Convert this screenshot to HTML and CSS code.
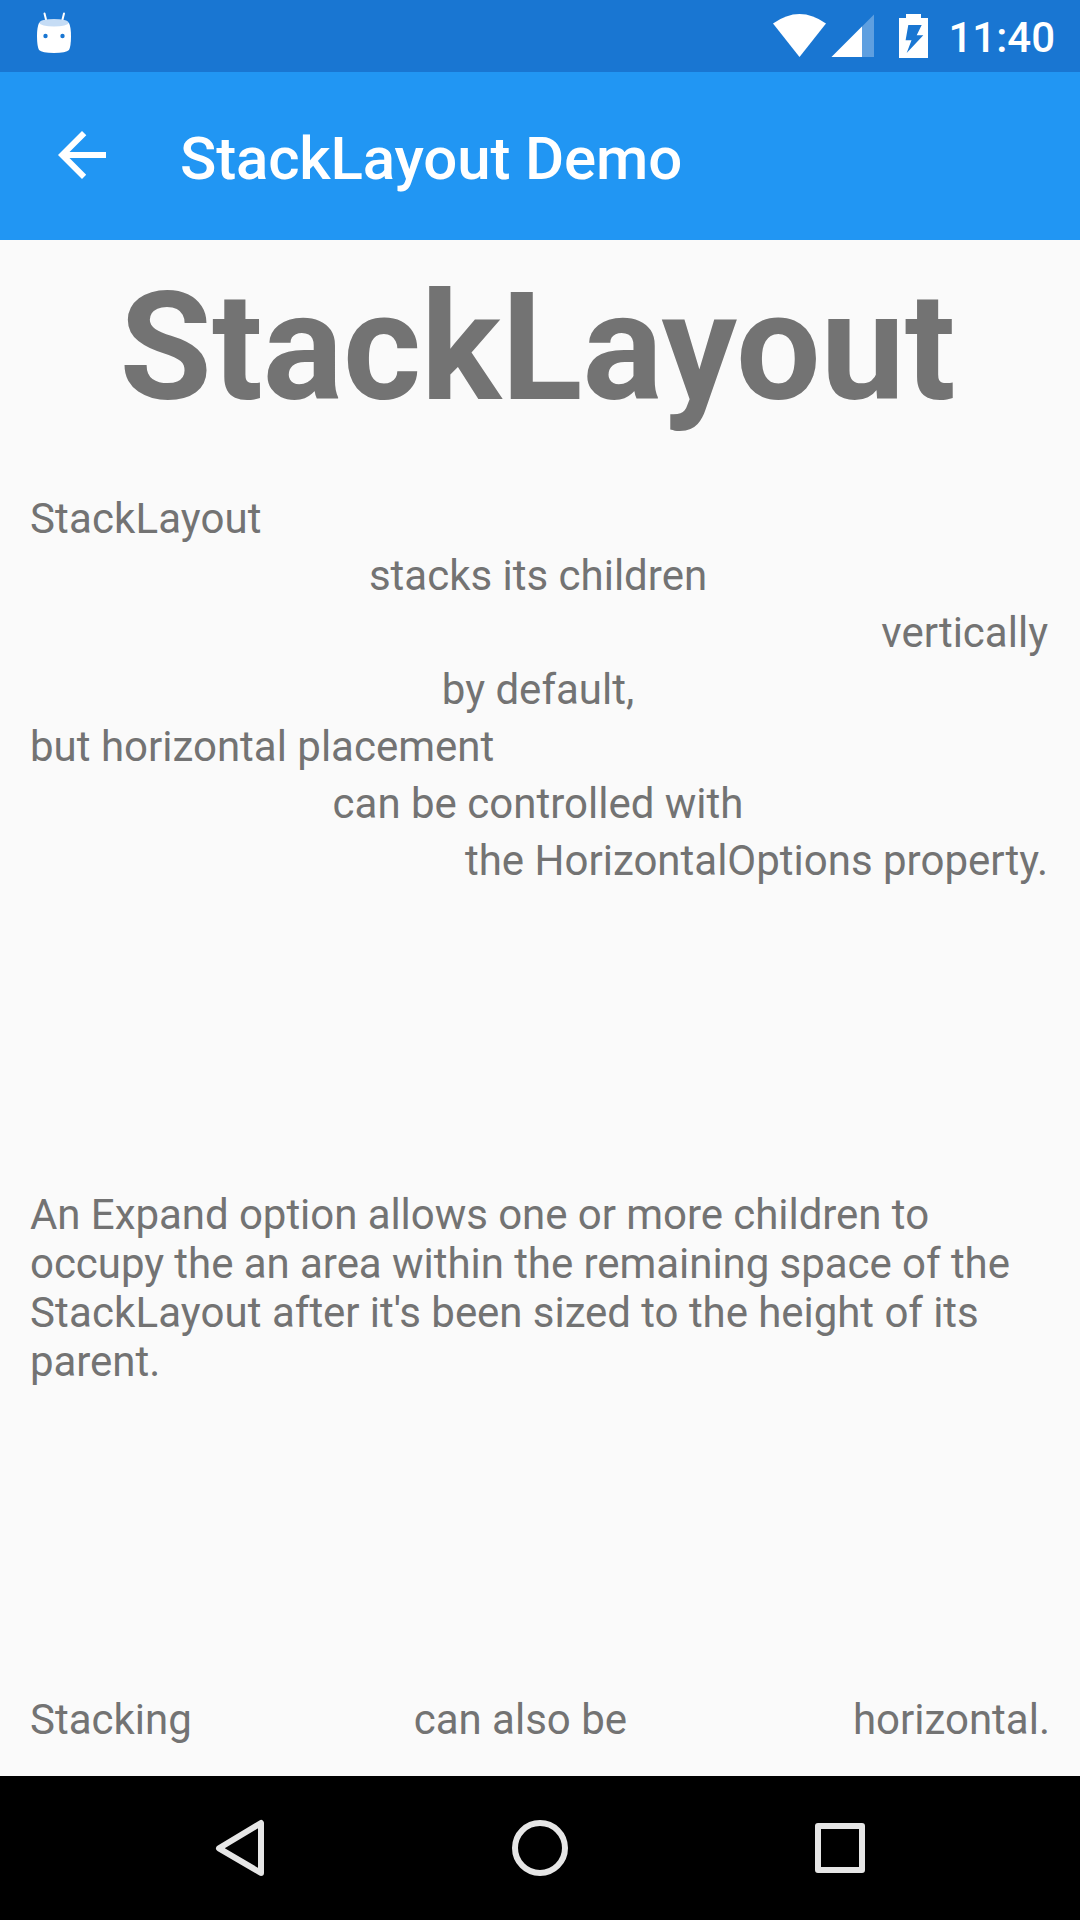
FILE: index.html
```html
<!DOCTYPE html>
<html lang="en">
<head>
<meta charset="utf-8">
<title>StackLayout Demo</title>
<link rel="stylesheet" href="styles.css">
</head>
<body>
<div class="status">
  <svg class="droid" width="36" height="44" viewBox="0 0 36 44"><path d="M8.5 1.5L10.5 9.5M28 1.5L26 9.5" stroke="#fff" stroke-width="2" stroke-linecap="round"/><path d="M3 11Q18 5 33 11Q35 15 35 24Q35 34 33 38Q30 41 18 41Q6 41 3 38Q1 34 1 24Q1 15 3 11Z" fill="#fff"/><ellipse cx="18" cy="10.7" rx="14.6" ry="3.8" fill="#c5dcf5"/><circle cx="9.5" cy="24" r="2.2" fill="#1976d2"/><circle cx="26.5" cy="24" r="2.2" fill="#1976d2"/></svg>
  <svg class="signals" width="160" height="72" viewBox="770 0 160 72"><path d="M773 23.5Q799.5 4.5 826 23.5L799.5 57Z" fill="#fff"/><path d="M874 14.5V57H831.5Z" fill="#5e9fe0"/><path d="M862 26.5V57H831.5Z" fill="#fff"/><path d="M906 14H921V18H928V58H899V18H906Z" fill="#fff"/><path d="M908.3 25H921.7L916.7 35.2H923.3L906.7 53L911.5 40.2H905.6Z" fill="#1976d2"/></svg>
  <span class="clock">11:40</span>
</div>
<header class="bar">
  <svg class="back" width="48" height="48" viewBox="0 0 48 48"><path d="M48 21H11.5L28.3 4.2L24 0L0 24L24 48L28.2 43.8L11.5 27H48Z" fill="#fff"/></svg>
  <span class="bar-title">StackLayout Demo</span>
</header>
<main class="page">
  <h1 class="heading">StackLayout</h1>
  <div class="stack">
    <span class="start first">StackLayout</span>
    <span class="center">stacks its children</span>
    <span class="end">vertically</span>
    <span class="center">by default,</span>
    <span class="start">but horizontal placement</span>
    <span class="center">can be controlled with</span>
    <span class="end">the HorizontalOptions property.</span>
  </div>
  <p class="expand">An Expand option allows one or more children to occupy the an area within the remaining space of the <span class="first">StackLayout</span> after it's been sized to the height of its parent.</p>
  <div class="row"><span>Stacking</span><span class="row-middle">can also be</span><span>horizontal.</span></div>
</main>
<nav class="nav">
  <svg width="1080" height="144" viewBox="0 0 1080 144" fill="none" stroke="#e6e6e6" stroke-width="6" stroke-linejoin="round"><path d="M261 47V97L219 72.3Z"/><circle cx="540" cy="72" r="25"/><rect x="818" y="50" width="44" height="44"/></svg>
</nav>
</body>
</html>
```
FILE: styles.css
```css
* { box-sizing: border-box; }
body { margin: 0; width: 1080px; height: 1920px; display: flex; flex-direction: column; background: #fafafa; color: #737373; font-family: Roboto, sans-serif; font-size: 42px; line-height: 49px; overflow: hidden; }
.status { height: 72px; background: #1976d2; display: flex; color: #fff; flex: none; }
.droid { margin: 12px auto 0 36px; }
.clock { font-size: 42px; font-weight: 500; line-height: 75px; margin: 0 25px 0 18px; }
.bar { height: 168px; flex: none; background: #2196f3; display: flex; align-items: center; padding: 0 58px; color: #fff; }
.back { margin-top: -2px; }
.bar-title { font-size: 60px; font-weight: 500; line-height: 70px; letter-spacing: -0.15px; margin: 6px 0 0 74px; }
.page { flex: 1; display: flex; flex-direction: column; padding: 20px 30px 32px; }
.heading { margin: 0; padding-right: 5px; text-align: center; font-size: 150px; font-weight: 700; line-height: 176px; }
.stack { margin-top: 58px; padding-right: 2px; display: flex; flex-direction: column; gap: 8px; }
.start { align-self: flex-start; }
.first { letter-spacing: 0.12px; }
.center { align-self: center; margin-right: 2px; }
.end { align-self: flex-end; }
.expand { margin: auto 0; padding-bottom: 5px; letter-spacing: -0.05px; }
.row { display: flex; justify-content: space-between; }
.row-middle { margin-right: 4px; }
.nav { height: 144px; flex: none; background: #000; }
.nav svg { display: block; }
```
